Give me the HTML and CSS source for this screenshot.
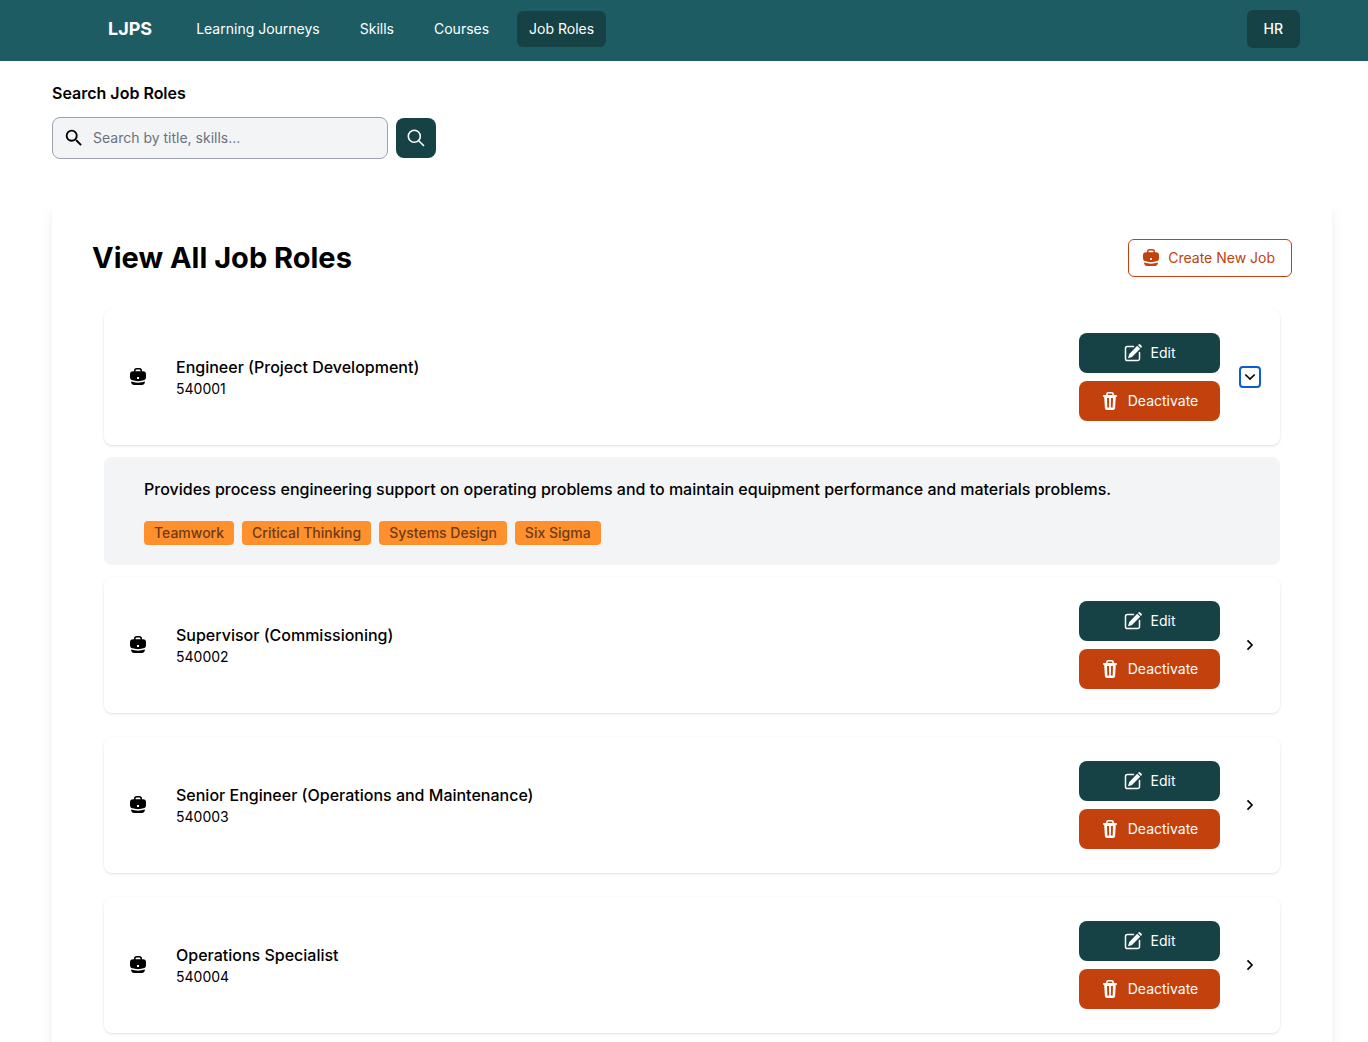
FILE: index.html
```html
<!DOCTYPE html>
<html lang="en">
<head>
<meta charset="utf-8">
<meta name="viewport" content="width=device-width, initial-scale=1">
<title>LJPS - Job Roles</title>
<link rel="stylesheet" href="styles.css">
</head>
<body>
<svg class="sprite" aria-hidden="true">
  <symbol id="briefcase" viewBox="0 0 18 18">
    <path fill-rule="evenodd" d="M5 3.300V2.500Q5 0 7.500 0h3Q13 0 13 2.500v.8h1Q17 3.300 17 6.500v2.800q0 2-1.500 2.800Q9 14.300 2.500 12.100 1 11.300 1 9.300V6.500Q1 3.300 4 3.300zM6.500 3.300h5v-.5q0-1.300-1.300-1.300H7.800q-1.300 0-1.300 1.300zM8 9v2h2V9z"/>
    <path d="M2 13.600q7 2.200 14 0-.2 3.400-3.200 3.400H5.200Q2.200 17 2 13.600z"/>
  </symbol>
  <symbol id="edit" viewBox="0 0 18 18">
    <path fill="none" stroke="currentColor" stroke-width="1.500" stroke-linecap="round" stroke-linejoin="round" d="M9.500 2.500H3.300a1.800 1.800 0 0 0-1.800 1.800v10.400a1.800 1.800 0 0 0 1.800 1.800h10.400a1.800 1.800 0 0 0 1.800-1.800V8.500"/>
    <path d="M13.200 1.800l3 3-8.200 8.100-4 1.400 1.300-4.200zM14 1l.7-.6q.8-.6 1.600.1l1.200 1.200q.7.800.1 1.600l-.6.700z"/>
  </symbol>
  <symbol id="trash" viewBox="0 0 18 18">
    <path fill-rule="evenodd" d="M5 3V2.400Q5 0 7.400 0h3.200Q13 0 13 2.400V3h2.200q.9 0 .9.900t-.9.900h-.4l-.7 11.200q-.1 2-2.100 2H6q-2 0-2.100-2L3.200 4.800h-.4q-.9 0-.9-.9t.9-.9zM6.600 3h4.800v-.5q0-.9-.9-.9h-3q-.9 0-.9.900zM6 6l.3 9.500h1.900L8 6zM10 6l-.2 9.500h1.900L12 6z"/>
  </symbol>
  <symbol id="chevron" viewBox="0 0 16 16">
    <path fill="none" stroke="currentColor" stroke-width="1.700" d="M5.500 3.300L10 8l-4.500 4.700"/>
  </symbol>
</svg>

<header class="topbar">
  <nav class="nav" aria-label="Main">
    <a class="brand" href="#">LJPS</a>
    <a class="nav-link" href="#">Learning Journeys</a>
    <a class="nav-link" href="#">Skills</a>
    <a class="nav-link" href="#">Courses</a>
    <a class="nav-link active" href="#" aria-current="page">Job Roles</a>
  </nav>
  <button class="role-button" type="button">HR</button>
</header>

<main class="page">
  <form class="search" role="search">
    <label class="search-label" for="search">Search Job Roles</label>
    <div class="search-row">
      <div class="search-field">
        <svg class="icon-field" viewBox="0 0 24 24" aria-hidden="true"><path d="M15.500 14h-.79l-.28-.27A6.471 6.471 0 0 0 16 9.500 6.500 6.500 0 1 0 9.500 16c1.610 0 3.090-.59 4.230-1.570l.27.28v.79l5 4.990L20.490 19l-4.990-5zm-6 0C7.010 14 5 11.990 5 9.500S7.010 5 9.500 5 14 7.010 14 9.500 11.990 14 9.500 14z"/></svg>
        <input class="search-input" id="search" type="text" placeholder="Search by title, skills...">
      </div>
      <button class="search-button" type="submit" aria-label="Search">
        <svg class="icon-search" viewBox="0 0 20 20" aria-hidden="true"><circle cx="8.300" cy="8.300" r="6"/><path d="M12.700 12.700L18 18"/></svg>
      </button>
    </div>
  </form>

  <section class="panel">
    <div class="panel-head">
      <h1 class="panel-title">View All Job Roles</h1>
      <button class="create-button" type="button"><svg class="icon"><use href="#briefcase"/></svg>Create New Job</button>
    </div>
    <div class="roles">
      <article class="role">
        <svg class="icon"><use href="#briefcase"/></svg>
        <div class="role-text"><h2 class="role-name">Engineer (Project Development)</h2><p class="role-id">540001</p></div>
        <div class="actions">
          <button class="action edit" type="button"><svg class="icon"><use href="#edit"/></svg>Edit</button>
          <button class="action deactivate" type="button"><svg class="icon"><use href="#trash"/></svg>Deactivate</button>
        </div>
        <button class="toggle open" type="button" aria-label="Hide details" aria-expanded="true"><svg class="icon-chevron"><use href="#chevron"/></svg></button>
      </article>
      <div class="details">
        <p class="details-text">Provides process engineering support on operating problems and to maintain equipment performance and materials problems.</p>
        <ul class="tags">
          <li class="tag">Teamwork</li>
          <li class="tag">Critical Thinking</li>
          <li class="tag">Systems Design</li>
          <li class="tag">Six Sigma</li>
        </ul>
      </div>
      <article class="role">
        <svg class="icon"><use href="#briefcase"/></svg>
        <div class="role-text"><h2 class="role-name">Supervisor (Commissioning)</h2><p class="role-id">540002</p></div>
        <div class="actions">
          <button class="action edit" type="button"><svg class="icon"><use href="#edit"/></svg>Edit</button>
          <button class="action deactivate" type="button"><svg class="icon"><use href="#trash"/></svg>Deactivate</button>
        </div>
        <button class="toggle" type="button" aria-label="Show details" aria-expanded="false"><svg class="icon-chevron"><use href="#chevron"/></svg></button>
      </article>
      <article class="role">
        <svg class="icon"><use href="#briefcase"/></svg>
        <div class="role-text"><h2 class="role-name">Senior Engineer (Operations and Maintenance)</h2><p class="role-id">540003</p></div>
        <div class="actions">
          <button class="action edit" type="button"><svg class="icon"><use href="#edit"/></svg>Edit</button>
          <button class="action deactivate" type="button"><svg class="icon"><use href="#trash"/></svg>Deactivate</button>
        </div>
        <button class="toggle" type="button" aria-label="Show details" aria-expanded="false"><svg class="icon-chevron"><use href="#chevron"/></svg></button>
      </article>
      <article class="role">
        <svg class="icon"><use href="#briefcase"/></svg>
        <div class="role-text"><h2 class="role-name">Operations Specialist</h2><p class="role-id">540004</p></div>
        <div class="actions">
          <button class="action edit" type="button"><svg class="icon"><use href="#edit"/></svg>Edit</button>
          <button class="action deactivate" type="button"><svg class="icon"><use href="#trash"/></svg>Deactivate</button>
        </div>
        <button class="toggle" type="button" aria-label="Show details" aria-expanded="false"><svg class="icon-chevron"><use href="#chevron"/></svg></button>
      </article>
    </div>
  </section>
</main>
</body>
</html>
```

FILE: styles.css
```css
* { box-sizing: border-box; }
html { scrollbar-width: none; }
body {
  margin: 0;
  background: #fff;
  color: #000;
  font: 400 14px/20px Inter, "Liberation Sans", sans-serif;
}
h1, h2, p, ul { margin: 0; padding: 0; }
button, input { font: inherit; }
button { border: 0; cursor: pointer; }
svg { display: block; flex: none; fill: currentColor; }
.sprite { position: absolute; width: 0; height: 0; }
.icon { width: 18px; height: 18px; }

.topbar {
  display: flex;
  align-items: center;
  justify-content: space-between;
  padding: 10px 68px 13px 108px;
  background: #1d5c63;
  color: #fff;
}
.nav { display: flex; align-items: center; gap: 16px; }
.brand {
  margin-right: 16px;
  color: inherit;
  font-size: 18px;
  line-height: 28px;
  font-weight: 700;
  text-decoration: none;
}
.nav-link {
  padding: 8px 12px;
  border-radius: 6px;
  color: inherit;
  font-weight: 400;
  text-decoration: none;
}
.nav-link.active { background: #174245; }
.role-button {
  height: 38px;
  padding: 0 17px;
  border-radius: 6px;
  background: #174245;
  color: #fff;
  font-weight: 500;
}

.page { padding: 20px 36px 0 52px; }
.search-label {
  display: block;
  margin-bottom: 12px;
  font-size: 16px;
  line-height: 24px;
  font-weight: 600;
}
.search-row { display: flex; align-items: center; gap: 8px; }
.search-field {
  display: flex;
  align-items: center;
  gap: 8px;
  width: 336px;
  height: 42px;
  padding: 0 10px;
  border: 1px solid #9ca3af;
  border-radius: 8px;
  background: #f3f4f6;
}
.icon-field { width: 22px; height: 22px; }
.search-input {
  flex: 1;
  min-width: 0;
  padding: 0;
  border: 0;
  outline: 0;
  background: transparent;
}
.search-input::placeholder { color: #6b7280; opacity: 1; }
.search-button {
  display: grid;
  place-items: center;
  width: 40px;
  height: 40px;
  padding: 0;
  border-radius: 8px;
  background: #174245;
  color: #fff;
}
.icon-search { width: 20px; height: 20px; fill: none; stroke: currentColor; stroke-width: 1.6; }

.panel {
  margin-top: 40px;
  padding: 40px 40px 28px;
  box-shadow: 0 10px 15px -3px rgb(0 0 0 / 10%), 0 4px 6px -4px rgb(0 0 0 / 10%);
}
.panel-head { display: flex; align-items: center; justify-content: space-between; }
.panel-title { font-size: 29px; line-height: 36px; font-weight: 700; }
.create-button {
  display: flex;
  align-items: center;
  gap: 8px;
  height: 38px;
  padding: 0 16px 0 13px;
  border: 1px solid #c2410c;
  border-radius: 6px;
  background: #fff;
  color: #c2410c;
  font-weight: 400;
}
.roles { display: flex; flex-direction: column; padding: 20px 12px 0; }
.role {
  display: flex;
  align-items: center;
  margin: 12px 0;
  padding: 24px 20px 24px 25px;
  border-radius: 8px;
  background: #fff;
  box-shadow: 0 1px 3px rgb(0 0 0 / 10%), 0 1px 2px -1px rgb(0 0 0 / 10%);
}
.role-text { flex: 1; margin-left: 29px; }
.role-name { font-size: 16px; line-height: 24px; font-weight: 500; }
.actions { display: flex; flex-direction: column; gap: 8px; width: 141px; }
.action {
  display: flex;
  align-items: center;
  justify-content: center;
  gap: 9px;
  height: 40px;
  padding: 0;
  border-radius: 8px;
  color: #fff;
}
.edit { background: #174245; }
.deactivate { background: #c2410c; }
.toggle {
  display: grid;
  place-items: center;
  width: 20px;
  height: 20px;
  margin-left: 20px;
  padding: 0;
  border-radius: 3px;
  background: transparent;
  color: #000;
}
.toggle.open { outline: 2px solid #0a5fd0; outline-offset: -1px; }
.icon-chevron { width: 16px; height: 16px; }
.open .icon-chevron { transform: rotate(90deg); }

.details {
  padding: 20px 40px;
  border-radius: 8px;
  background: #f3f4f6;
}
.details-text { font-size: 16px; line-height: 24px; font-weight: 500; }
.tags { display: flex; flex-wrap: wrap; gap: 8px; margin-top: 20px; list-style: none; }
.tag {
  padding: 2px 10px;
  border-radius: 4px;
  background: #ff902e;
  color: #6f3a16;
  font-weight: 500;
}
```
